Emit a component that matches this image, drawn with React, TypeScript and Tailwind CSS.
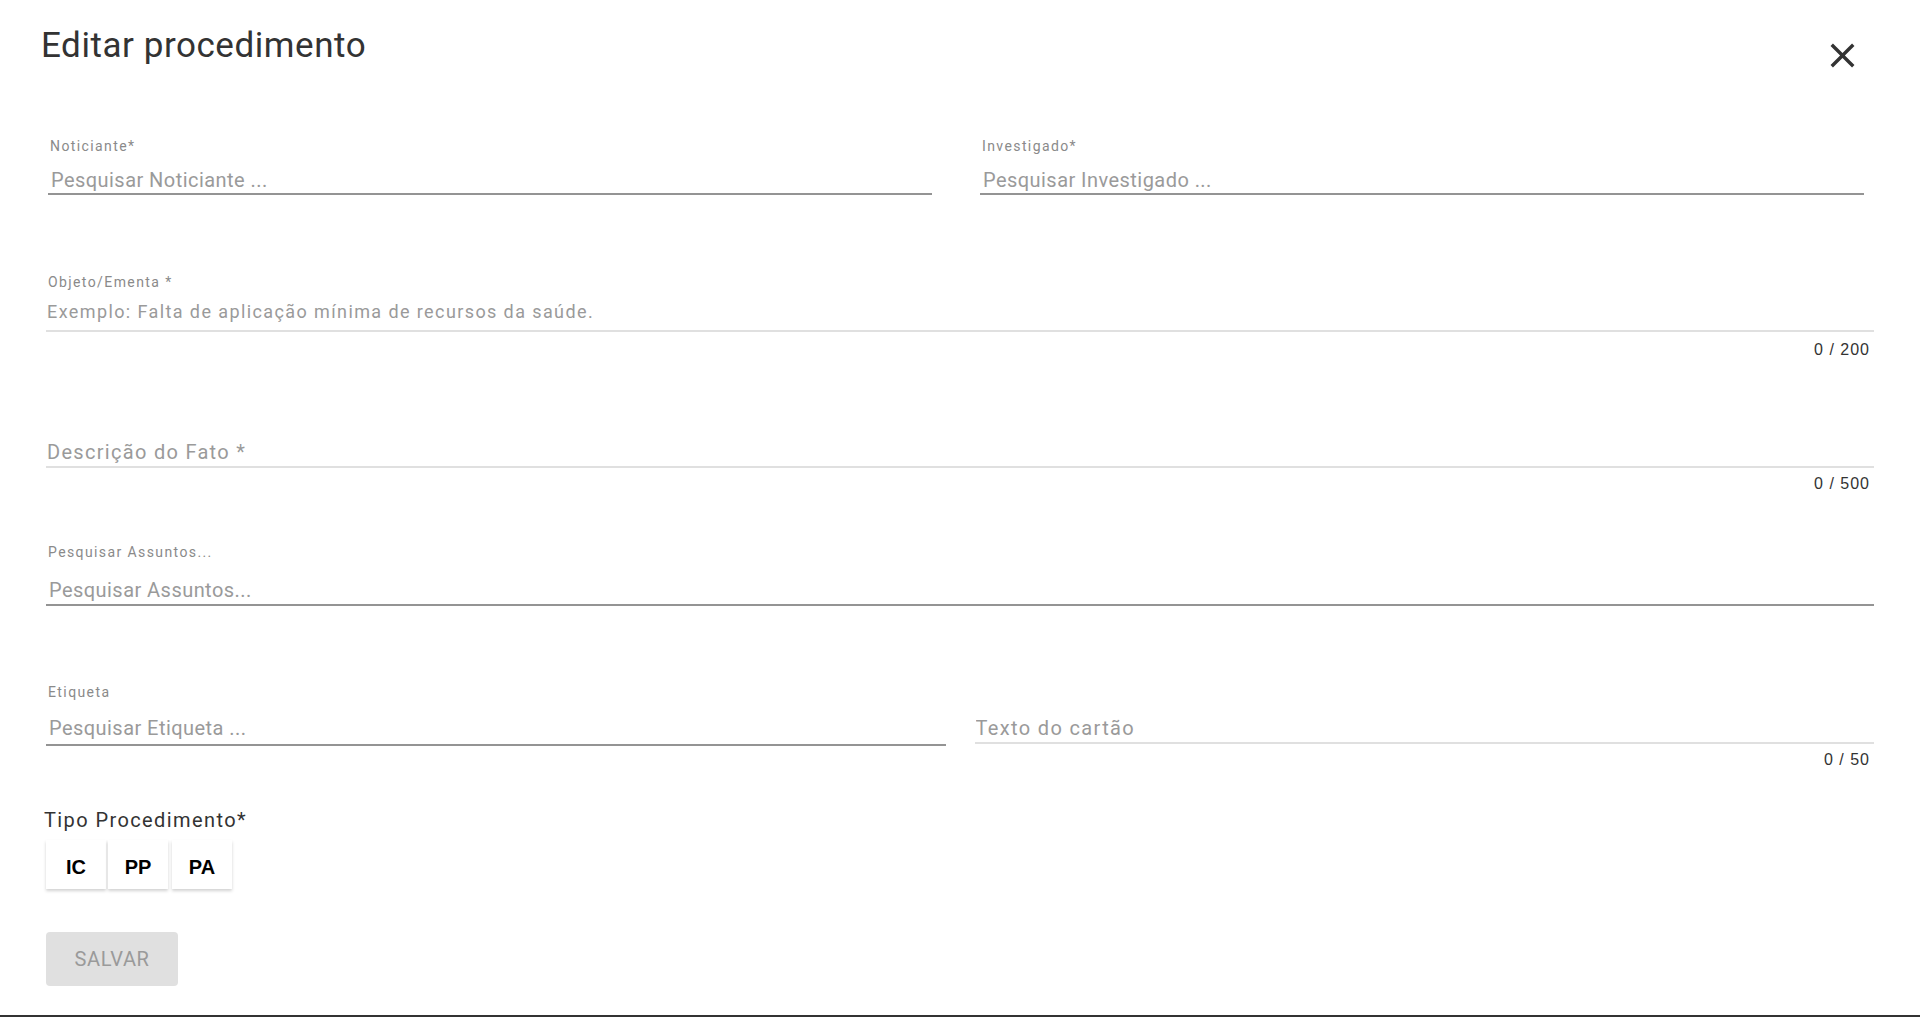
import React from 'react';

function CloseIcon() {
  return (
    <svg viewBox="0 0 24 24" className="w-[41px] h-[41px]" fill="#333333">
      <path d="M19 6.41 17.59 5 12 10.59 6.41 5 5 6.41 10.59 12 5 17.59 6.41 19 12 13.41 17.59 19 19 17.59 13.41 12z" />
    </svg>
  );
}

function Counter({ text, className }: { text: string; className: string }) {
  return (
    <div
      className={`text-right pr-[4px] text-[16px] leading-[20px] tracking-[1px] text-[#333] font-['Liberation_Sans',Arial,sans-serif] ${className}`}
    >
      {text}
    </div>
  );
}

function SearchField({
  label,
  placeholder,
  gap,
  pb,
}: {
  label: string;
  placeholder: string;
  gap: string;
  pb: string;
}) {
  return (
    <div>
      <div className="pl-[2px] text-[14px] leading-[16px] tracking-[1.4px] text-[#8a8a8a]">{label}</div>
      <div className={`${gap} ${pb} border-b-2 border-[#949494]`}>
        <input
          className="block w-full h-[24px] pl-[3px] p-0 text-[20px] leading-[24px] tracking-[0.45px] bg-transparent outline-none placeholder:text-[#9a9a9a]"
          placeholder={placeholder}
        />
      </div>
    </div>
  );
}

const tipos = ['IC', 'PP', 'PA'];

export default function App() {
  return (
    <div className="h-[1018px] bg-white flex flex-col font-[Roboto,sans-serif] overflow-hidden">
      <div className="flex justify-between items-start pt-[26px]">
        <h2 className="pl-[41px] text-[35px] leading-[40px] tracking-[0.55px] text-[#333] font-normal">
          Editar procedimento
        </h2>
        <button className="mt-[9px] mr-[57px]">
          <CloseIcon />
        </button>
      </div>

      <div className="flex-1 px-[46px]">
        {/* noticiante / investigado */}
        <div className="mt-[62px] pl-[2px] pr-[10px] grid grid-cols-2 gap-[48px]">
          <SearchField
            label="Noticiante*"
            placeholder="Pesquisar Noticiante ..."
            gap="mt-[14px]"
            pb="pb-[1px]"
          />
          <SearchField
            label="Investigado*"
            placeholder="Pesquisar Investigado ..."
            gap="mt-[14px]"
            pb="pb-[1px]"
          />
        </div>

        {/* objeto */}
        <div className="mt-[79px]">
          <div className="pl-[2px] text-[14px] leading-[16px] tracking-[1.4px] text-[#8a8a8a]">
            Objeto/Ementa *
          </div>
          <div className="mt-[11px] pb-[7px] border-b-2 border-[#e0e0e0]">
            <input
              className="block w-full h-[22px] pl-[1px] p-0 text-[18px] leading-[22px] tracking-[1.4px] bg-transparent outline-none placeholder:text-[#9a9a9a]"
              placeholder="Exemplo: Falta de aplicação mínima de recursos da saúde."
            />
          </div>
          <Counter text="0 / 200" className="mt-[8px]" />
        </div>

        {/* descricao */}
        <div className="mt-[80px]">
          <div className="pb-[2px] border-b-2 border-[#e0e0e0]">
            <div className="pl-[1px] text-[20px] leading-[24px] tracking-[1.3px] text-[#9a9a9a]">
              Descrição do Fato *
            </div>
          </div>
          <Counter text="0 / 500" className="mt-[6px]" />
        </div>

        {/* assuntos */}
        <div className="mt-[50px]">
          <SearchField
            label="Pesquisar Assuntos..."
            placeholder="Pesquisar Assuntos..."
            gap="mt-[18px]"
            pb="pb-[2px]"
          />
        </div>

        {/* etiqueta / texto do cartao */}
        <div className="mt-[78px] grid grid-cols-2 gap-[29px]">
          <SearchField
            label="Etiqueta"
            placeholder="Pesquisar Etiqueta ..."
            gap="mt-[16px]"
            pb="pb-[4px]"
          />
          <div className="pt-[32px]">
            <div className="pb-[2px] border-b-2 border-[#e0e0e0]">
              <input
                className="block w-full h-[24px] pl-[1px] p-0 text-[20px] leading-[24px] tracking-[1.35px] bg-transparent outline-none placeholder:text-[#9a9a9a]"
                placeholder="Texto do cartão"
              />
            </div>
            <Counter text="0 / 50" className="mt-[6px]" />
          </div>
        </div>

        {/* tipo procedimento */}
        <div className="mt-[38px] -ml-[2px] text-[20px] leading-[24px] tracking-[1.4px] text-[#333]">
          Tipo Procedimento*
        </div>
        <div className="mt-[8px] flex gap-[2px]">
          {tipos.map((t, i) => (
            <button
              key={t}
              className={`w-[60px] h-[49px] pt-[5px] flex items-center justify-center bg-white shadow-[0_2px_3px_rgba(0,0,0,0.18)] text-[20px] leading-[24px] font-bold text-black font-['Liberation_Sans',Arial,sans-serif] ${
                i === 2 ? 'ml-[2px]' : ''
              }`}
            >
              {t}
            </button>
          ))}
        </div>

        <button className="mt-[43px] w-[132px] h-[54px] rounded-[4px] bg-[#e0e0e0] text-[20px] leading-[24px] tracking-[0.6px] text-[#9a9a9a]">
          SALVAR
        </button>
      </div>

      <div className="h-[2px] mb-[1px] bg-[#333]" />
    </div>
  );
}
